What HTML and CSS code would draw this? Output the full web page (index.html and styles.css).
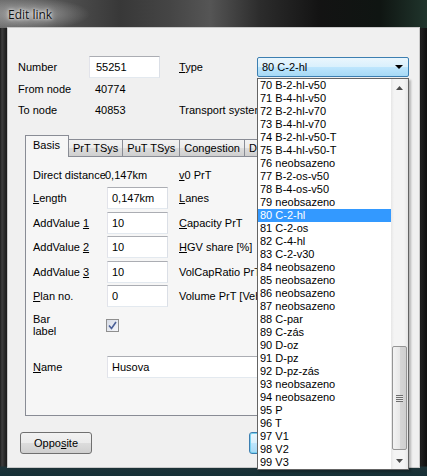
FILE: index.html
```html
<!DOCTYPE html>
<html>
<head>
<meta charset="utf-8">
<link rel="stylesheet" href="styles.css">
</head>
<body>
<div class="window">
  <div class="titlebar"><span class="title">Edit link</span></div>
  <div class="client">
    <div class="header">
      <span>Number</span>
      <span class="field">55251</span>
      <span></span>
      <span><u>T</u>ype</span>
      <span class="combo"><span>80 C-2-hl</span><span class="arrow"></span></span>

      <span>From node</span>
      <span class="value">40774</span>
      <span></span><span></span><span></span>

      <span>To node</span>
      <span class="value">40853</span>
      <span></span>
      <span class="nowrap">Transport system</span>
      <span></span>
    </div>

    <div class="tabctl">
      <div class="tabstrip">
        <span class="tab active">Basis</span>
        <span class="tab">PrT TSys</span>
        <span class="tab">PuT TSys</span>
        <span class="tab">Congestion</span>
        <span class="tab">D</span>
      </div>
      <div class="panel">
        <span class="nowrap">Direct distance</span>
        <span class="value tight">0,147km</span>
        <span class="rlabel"><u>v</u>0 PrT</span>

        <span><u>L</u>ength</span>
        <span class="field in">0,147km</span>
        <span class="rlabel"><u>L</u>anes</span>

        <span>AddValue <u>1</u></span>
        <span class="field in">10</span>
        <span class="rlabel"><u>C</u>apacity PrT</span>

        <span>AddValue <u>2</u></span>
        <span class="field in">10</span>
        <span class="rlabel"><u>H</u>GV share [%]</span>

        <span>AddValue <u>3</u></span>
        <span class="field in">10</span>
        <span class="rlabel">VolCapRatio PrT</span>

        <span><u>P</u>lan no.</span>
        <span class="field in">0</span>
        <span class="rlabel">Volume PrT [Veh]</span>

        <span class="twoline">Bar<br>label</span>
        <span class="check"><svg width="9" height="9" viewBox="0 0 9 9"><path d="M1 4.5 L3.5 7.5 L8 1" fill="none" stroke="#4a5f97" stroke-width="1.6"/></svg></span>
        <span></span>

        <span class="spacer"></span>

        <span><u>N</u>ame</span>
        <span class="field in wide">Husova</span>
      </div>
    </div>

    <div class="buttons">
      <span class="button">Oppo<u>s</u>ite</span>
      <span class="button default"></span>
    </div>
  </div>

  <div class="dropdown">
    <ul class="items">
      <li>70 B-2-hl-v50</li>
      <li>71 B-4-hl-v50</li>
      <li>72 B-2-hl-v70</li>
      <li>73 B-4-hl-v70</li>
      <li>74 B-2-hl-v50-T</li>
      <li>75 B-4-hl-v50-T</li>
      <li>76 neobsazeno</li>
      <li>77 B-2-os-v50</li>
      <li>78 B-4-os-v50</li>
      <li>79 neobsazeno</li>
      <li class="sel">80 C-2-hl</li>
      <li>81 C-2-os</li>
      <li>82 C-4-hl</li>
      <li>83 C-2-v30</li>
      <li>84 neobsazeno</li>
      <li>85 neobsazeno</li>
      <li>86 neobsazeno</li>
      <li>87 neobsazeno</li>
      <li>88 C-par</li>
      <li>89 C-zás</li>
      <li>90 D-oz</li>
      <li>91 D-pz</li>
      <li>92 D-pz-zás</li>
      <li>93 neobsazeno</li>
      <li>94 neobsazeno</li>
      <li>95 P</li>
      <li>96 T</li>
      <li>97 V1</li>
      <li>98 V2</li>
      <li>99 V3</li>
    </ul>
    <div class="scrollbar">
      <span class="sbtn"><svg width="7" height="4" viewBox="0 0 7 4"><path d="M0 4 L3.5 0 L7 4 Z" fill="#4d4d4d"/></svg></span>
      <span class="track"><span class="thumb"><span class="grip"></span></span></span>
      <span class="sbtn"><svg width="7" height="4" viewBox="0 0 7 4"><path d="M0 0 L3.5 4 L7 0 Z" fill="#4d4d4d"/></svg></span>
    </div>
  </div>
</div>
</body>
</html>
```

FILE: styles.css
```css
html, body {
  margin: 0;
  padding: 0;
  background: #000;
}

body {
  font-family: "Liberation Sans", Arial, sans-serif;
  font-size: 11px;
  color: #000;
}

.window {
  position: relative;
  width: 427px;
  height: 476px;
  box-sizing: border-box;
  display: flex;
  flex-direction: column;
  padding: 0 8px 9px 8px;
  overflow: hidden;
  background:
    linear-gradient(180deg, rgba(0,0,0,0) 0, rgba(0,0,0,0) 466px, #1d3338 467px, #163036 476px),
    linear-gradient(90deg, #1c1c1c 0, #3e3e3e 2px, #262626 5px, #141414 8px, #141414 419px, #202020 421px, #0e0e0e 427px);
}

.titlebar {
  height: 28px;
  margin: 0 -8px;
  padding-left: 8px;
  display: flex;
  align-items: center;
  background:
    radial-gradient(ellipse 60px 16px at 30px 14px, rgba(230,230,230,0.5), rgba(230,230,230,0) 100%),
    linear-gradient(90deg, #6e6e6e 0, #525252 60px, #383838 120px, #454545 170px, #555555 210px, #2c2c2c 260px, #131313 320px, #0f1512 380px, #20352c 427px);
}

.title {
  font-family: "Open Sans", "Noto Sans", sans-serif;
  font-size: 12px;
  color: #111;
  text-shadow: 0 0 6px #fff, 0 0 3px #fff;
}

.client {
  flex: 1;
  background: #f0f0f0;
  padding: 28px 10px 0 10px;
  box-shadow: 0 0 0 1px #c9c9c9;
}

.header {
  display: grid;
  grid-template-columns: 71px 71px 19px 78px 152px;
  grid-template-rows: 22px 21px 21px;
  align-items: center;
}

.nowrap {
  white-space: nowrap;
}

.field {
  box-sizing: border-box;
  height: 22px;
  display: flex;
  align-items: center;
  padding-left: 6px;
  background: #fff;
  border: 1px solid;
  border-color: #abadb3 #dbdfe6 #e3e9ef #e2e3ea;
}

.value {
  padding-left: 6px;
}

.combo {
  box-sizing: border-box;
  height: 20px;
  display: flex;
  align-items: center;
  justify-content: space-between;
  padding: 0 4px 0 4px;
  border: 1px solid #3c7fb1;
  border-radius: 2px;
  background: linear-gradient(180deg, #eaf6fd 0, #d9f0fc 50%, #bee6fd 50%, #a7d9f5 100%);
}

.arrow {
  width: 0;
  height: 0;
  border-left: 4px solid transparent;
  border-right: 4px solid transparent;
  border-top: 4px solid #000;
  margin-right: 1px;
}

.tabctl {
  margin: 15px 7px 0 7px;
}

.tabstrip {
  display: flex;
  align-items: flex-end;
  height: 21px;
}

.tab {
  box-sizing: border-box;
  height: 17px;
  padding: 0 4px;
  display: flex;
  align-items: center;
  border: 1px solid #898c95;
  border-bottom: none;
  margin-right: -1px;
  background: linear-gradient(180deg, #f2f2f2 0, #ebebeb 50%, #dddddd 50%, #cfcfcf 100%);
  white-space: nowrap;
}

.tab.active {
  height: 22px;
  margin-bottom: -1px;
  padding: 0 8px 3px 7px;
  position: relative;
  z-index: 1;
  background: #f6f6f6;
}

.panel {
  box-sizing: border-box;
  border: 1px solid #898c95;
  background: #f6f6f6;
  padding: 7.5px 0 37px 7px;
  display: grid;
  grid-template-columns: 72px 63px auto;
  grid-template-rows: 20px 22px 22px 22px 22px 22px 31px 10px 22px;
  row-gap: 2.5px;
  align-items: center;
}

.panel .in {
  margin-left: 2px;
  padding-left: 4px;
}

.panel .tight {
  padding-left: 0;
}

.panel .wide {
  grid-column: 2 / 4;
  margin-right: 12px;
}

.rlabel {
  padding-left: 11px;
  white-space: nowrap;
}

.twoline {
  line-height: 12px;
}

.spacer {
  grid-column: 1 / 4;
}

.check {
  box-sizing: border-box;
  width: 13px;
  height: 13px;
  margin-left: 1px;
  border: 1px solid #8f8f8f;
  background: linear-gradient(135deg, #d6dbe6, #f6f7fa);
  display: flex;
  align-items: center;
  justify-content: center;
}

.buttons {
  display: flex;
  margin-top: 16px;
  padding-left: 2px;
}

.button {
  box-sizing: border-box;
  width: 72px;
  height: 22px;
  display: flex;
  align-items: center;
  justify-content: center;
  border: 1px solid #707070;
  border-radius: 3px;
  background: linear-gradient(180deg, #f2f2f2 0, #ebebeb 50%, #dddddd 50%, #cfcfcf 100%);
}

.button.default {
  margin-left: 157px;
  width: 75px;
  border-color: #3c7fb1;
  box-shadow: inset 0 0 0 1px #79d2f0;
  background: linear-gradient(180deg, #eaf6fd 0, #d9f0fc 50%, #bee6fd 50%, #a7d9f5 100%);
}

.dropdown {
  position: absolute;
  left: 257px;
  top: 78px;
  width: 152px;
  height: 392px;
  box-sizing: border-box;
  border: 1px solid #646464;
  background: #fff;
  display: flex;
  box-shadow: 2px 2px 2px rgba(0,0,0,0.25);
}

.items {
  list-style: none;
  margin: 0;
  padding: 0;
  width: 133px;
}

.items li {
  height: 13px;
  line-height: 13px;
  padding-left: 2px;
  white-space: nowrap;
}

.items li.sel {
  background: #3399ff;
  color: #fff;
}

.scrollbar {
  width: 17px;
  display: flex;
  flex-direction: column;
  background: linear-gradient(90deg, #e6e6e6 0, #f4f4f4 3px, #f4f4f4 13px, #e6e6e6 17px);
}

.sbtn {
  height: 17px;
  display: flex;
  align-items: center;
  justify-content: center;
}

.track {
  flex: 1;
  display: flex;
  flex-direction: column;
}

.thumb {
  box-sizing: border-box;
  margin: 250px 1px 0 1px;
  height: 104px;
  border: 1px solid #959595;
  border-radius: 2px;
  background: linear-gradient(90deg, #f3f3f3 0, #e8e8e8 50%, #d6d6d6 51%, #cfcfcf 100%);
  display: flex;
  align-items: center;
  justify-content: center;
}

.grip {
  width: 7px;
  height: 7px;
  background: repeating-linear-gradient(180deg, #6e6e6e 0, #6e6e6e 1px, #e8e8e8 1px, #e8e8e8 2px);
}
```
